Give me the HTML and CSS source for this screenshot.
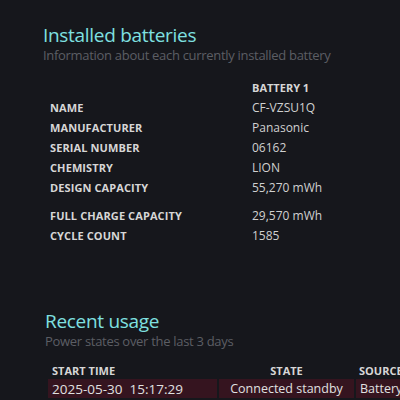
FILE: index.html
```html
<!DOCTYPE html>
<html lang="en">
<head>
    <meta charset="UTF-8">
    <title>Battery report</title>
    <link rel="stylesheet" href="styles.css">
</head>
<body>
    <section class="section installed">
        <h2>Installed batteries</h2>
        <p class="sub">Information about each currently installed battery</p>
        <table class="info">
            <tr class="head"><td></td><td>BATTERY 1</td></tr>
            <tr><th>NAME</th><td>CF-VZSU1Q</td></tr>
            <tr><th>MANUFACTURER</th><td>Panasonic</td></tr>
            <tr><th>SERIAL NUMBER</th><td>06162</td></tr>
            <tr><th>CHEMISTRY</th><td>LION</td></tr>
            <tr><th>DESIGN CAPACITY</th><td>55,270 mWh</td></tr>
            <tr class="gap"><th>FULL CHARGE CAPACITY</th><td>29,570 mWh</td></tr>
            <tr><th>CYCLE COUNT</th><td>1585</td></tr>
        </table>
    </section>

    <section class="section recent">
        <h2>Recent usage</h2>
        <p class="sub">Power states over the last 3 days</p>
        <table class="usage">
            <tr class="head">
                <th class="c-time">START TIME</th>
                <th class="c-state">STATE</th>
                <th class="c-src">SOURCE</th>
            </tr>
            <tr class="row">
                <td class="c-time">2025-05-30&nbsp;&nbsp;15:17:29</td>
                <td class="c-state">Connected standby</td>
                <td class="c-src">Battery</td>
            </tr>
        </table>
    </section>
</body>
</html>
```

FILE: styles.css
```css
body {
    font-family: 'Open Sans', 'Noto Sans', Arial, sans-serif;
    background-color: #16171c;
    color: #dcdcdc;
    margin: 0;
    padding: 0;
    overflow: hidden;
    width: 400px;
    height: 400px;
}
.section {
    padding-left: 43px;
}
.installed {
    padding-top: 23px;
}
.recent {
    padding-top: 64px;
    padding-left: 45px;
}
h2 {
    margin: 0;
    font-size: 19px;
    font-weight: 400;
    line-height: 24px;
    color: #7fe0e0;
    letter-spacing: -0.3px;
}
.sub {
    margin: 0;
    font-size: 13px;
    line-height: 17px;
    color: #5c5e64;
    letter-spacing: -0.3px;
}
.info {
    border-collapse: collapse;
    margin-top: 16px;
    margin-left: 7px;
}
.info th, .info td {
    padding: 0;
    height: 20px;
    text-align: left;
    white-space: nowrap;
}
.info th {
    width: 202px;
    font-size: 11px;
    font-weight: 700;
    color: #d6d6d6;
    letter-spacing: 0.1px;
}
.info td {
    font-size: 12px;
    color: #d0d0d0;
}
.info .head td {
    height: 17px;
    font-size: 11px;
    font-weight: 700;
    color: #d6d6d6;
    vertical-align: top;
}
.info .gap th, .info .gap td {
    height: 20px;
    padding-top: 8px;
}
.usage {
    border-collapse: collapse;
    margin-top: 12px;
    margin-left: 3px;
    table-layout: fixed;
    width: 352px;
}
.usage th, .usage td {
    padding: 0 4px;
    white-space: nowrap;
    overflow: hidden;
    text-align: left;
}
.usage th {
    font-size: 11px;
    font-weight: 700;
    color: #d6d6d6;
    height: 17px;
}
.c-time { width: 162px; }
.c-state { width: 129px; }
.usage .c-state { text-align: center; }
.row td {
    background-color: #35141f;
    border-right: 2px solid #16171c;
    font-size: 12.5px;
    color: #e0e0e0;
    height: 19px;
}
.row .c-time {
    font-size: 13.5px;
}
.row .c-src {
    border-right: none;
    text-overflow: clip;
}
```
